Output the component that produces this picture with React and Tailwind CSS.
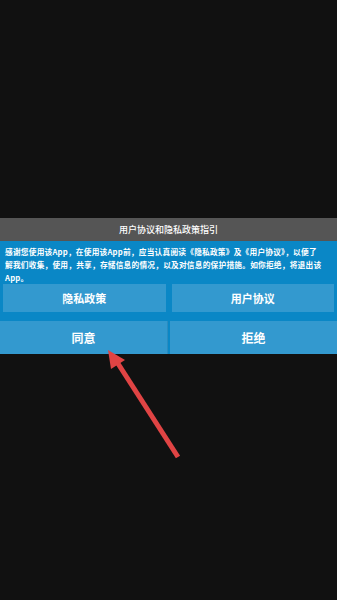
export default function App() {
  const font = { fontFamily: '"Noto Sans CJK SC", "Noto Sans", sans-serif' };
  return (
    <div className="relative w-[337px] h-[600px] bg-[#111111] flex flex-col overflow-hidden" style={font}>
      <div className="h-[218px]" />
      {/* title bar */}
      <div className="h-[23px] bg-[#555555] flex items-center justify-center text-white text-[9px] font-medium">
        用户协议和隐私政策指引
      </div>
      {/* panel */}
      <div className="bg-[#0a87c6] flex flex-col">
        <p className="px-[5px] pt-[4px] text-white text-[7.7px] leading-[13px] tracking-[0.22px] font-bold whitespace-nowrap">
          感谢您使用该App，在使用该App前，应当认真阅读《隐私政策》及《用户协议》，以便了<br />
          解我们收集，使用，共享，存储信息的情况，以及对信息的保护措施。如你拒绝，将退出该<br />
          App。
        </p>
        <div className="flex gap-[6px] px-[3px]">
          <div className="flex-1 h-[28px] bg-[#3399cf] flex items-center justify-center text-white text-[11px] font-bold">隐私政策</div>
          <div className="flex-1 h-[28px] bg-[#3399cf] flex items-center justify-center text-white text-[11px] font-bold">用户协议</div>
        </div>
        <div className="flex gap-[2px] mt-[9px]">
          <div className="flex-1 h-[33px] bg-[#3399cf] border-r border-[#2a8cc0] flex items-center justify-center text-white text-[12px] font-bold">同意</div>
          <div className="flex-1 h-[33px] bg-[#3399cf] flex items-center justify-center text-white text-[12px] font-bold">拒绝</div>
        </div>
      </div>
      {/* arrow */}
      <svg className="absolute left-0 top-0" width="337" height="600">
        <line x1="178" y1="457" x2="117" y2="362" stroke="#e04444" strokeWidth="5" />
        <polygon points="108,350 125,360 111,369" fill="#e04444" />
      </svg>
    </div>
  );
}
